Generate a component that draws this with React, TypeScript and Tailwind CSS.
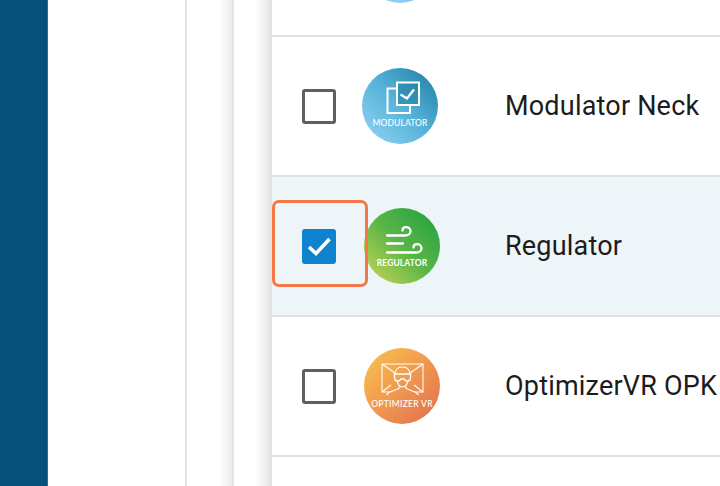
const rows = [
  { name: "Modulator Neck", logo: "modulator", checked: false },
  { name: "Regulator", logo: "regulator", checked: true },
  { name: "OptimizerVR OPK", logo: "optimizer", checked: false },
];

function ModulatorIcon() {
  return (
    <svg width="76" height="50" viewBox="0 0 76 50" fill="none" stroke="white" className="absolute left-0 top-0">
      <path d="M35 20.5H25.5V45H48V37" strokeWidth="2" />
      <rect x="35" y="14.5" width="22" height="22.5" fill="#1f7fa3" fillOpacity="0.55" strokeWidth="2" />
      <path d="M38.5 26.5L45 30.5L52 21.5" strokeWidth="2.4" />
    </svg>
  );
}

function RegulatorIcon() {
  return (
    <svg width="76" height="50" viewBox="0 0 76 50" fill="none" stroke="white" strokeWidth="2.3" strokeLinecap="round" className="absolute left-0 top-0">
      <path d="M23 27.5H41C44.5 27.5 46.5 25.5 46.5 23.2C46.5 20.7 44.5 19.2 42.2 19.2C40 19.2 38.5 20.7 38.5 22.5" />
      <path d="M23 35.5H39" />
      <path d="M23 44.5H52.5C55.5 44.5 57.5 42.5 57.5 40.2C57.5 37.7 55.5 36.2 53.2 36.2C51 36.2 49.5 37.7 49.5 39.5" />
    </svg>
  );
}

function OptimizerIcon() {
  return (
    <svg width="76" height="50" viewBox="0 0 76 50" fill="none" stroke="white" strokeWidth="1.1" className="absolute left-0 top-0">
      <path d="M18 16H59V44H51M18 16V44H26" />
      <path d="M18 16L31 25M59 16L46 25M18 44L27 37M59 44L50 37" />
      <path d="M31 27C31 21.5 34 19 38.5 19C43 19 46 21.5 46 27" />
      <path d="M30.5 26H46.5V29.5C46.5 32 45 33 43.5 33H42L40 31H37L35 33H33.5C32 33 30.5 32 30.5 29.5Z" strokeWidth="1.4" />
      <path d="M33 33C34 37 36 39 38.5 39C41 39 43 37 44 33" />
      <path d="M35 38.5V40.5L25 44.5L22.5 47M42 38.5V40.5L52 44.5L54.5 47" />
    </svg>
  );
}

function Logo({ kind }: { kind: string }) {
  if (kind === "modulator") {
    return (
      <div className="relative w-[76px] h-[76px] shrink-0 rounded-full bg-gradient-to-tr from-[#93d5f4] via-[#57b3da] to-[#167c9f] overflow-hidden">
        <ModulatorIcon />
        <span className="absolute left-0 right-0 top-[50px] text-center font-['Lato',sans-serif] text-[8.5px] leading-[11px] font-medium tracking-[0.1px] text-white">MODULATOR</span>
      </div>
    );
  }
  if (kind === "regulator") {
    return (
      <div className="relative w-[76px] h-[76px] shrink-0 rounded-full bg-gradient-to-tr from-[#cbd757] via-[#58b547] to-[#08a03f] overflow-hidden">
        <RegulatorIcon />
        <span className="absolute left-0 right-0 top-[50px] text-center font-['Lato',sans-serif] text-[8.5px] leading-[11px] font-bold tracking-[0.1px] text-white">REGULATOR</span>
      </div>
    );
  }
  return (
    <div className="relative w-[76px] h-[76px] shrink-0 rounded-full bg-gradient-to-br from-[#f9c44d] via-[#f0984f] to-[#de6c50] overflow-hidden">
      <OptimizerIcon />
      <span className="absolute left-0 right-0 top-[51px] text-center font-['Lato',sans-serif] text-[8.5px] leading-[11px] font-medium tracking-[0.3px] whitespace-nowrap text-white">OPTIMIZER VR</span>
    </div>
  );
}

function Checkbox({ checked }: { checked: boolean }) {
  if (checked) {
    return (
      <div className="w-[34px] h-[35px] rounded-[3px] bg-[#0f83cf] flex items-center justify-center">
        <svg width="26" height="22" viewBox="0 0 26 22" fill="none">
          <path d="M3 12L10 18.5L23.5 4" stroke="white" strokeWidth="3.6" />
        </svg>
      </div>
    );
  }
  return <div className="w-[34px] h-[35px] rounded-[3px] border-[3px] border-[#5f5f5f] bg-white" />;
}

function Row({ row }: { row: (typeof rows)[number] }) {
  return (
    <div className={`relative h-[140px] shrink-0 flex items-center border-b-2 border-[#e2e2e2] ${row.checked ? "bg-[#eef5f9]" : "bg-white"}`}>
      <div className="w-[90px] pl-[30px] shrink-0">
        <Checkbox checked={row.checked} />
      </div>
      {/* logo cell, the modulator one sits 2px further left */}
      <div className={`w-[144px] shrink-0 ${row.logo === "modulator" ? "" : "pl-[2px]"}`}>
        <Logo kind={row.logo} />
      </div>
      <span className="-ml-[1px] font-['Roboto',sans-serif] text-[27px] leading-none tracking-[0.2px] whitespace-nowrap text-[#1c1c1c]">{row.name}</span>
      {row.checked && (
        <div className="absolute left-0 top-[23px] w-[96px] h-[87px] rounded-[7px] border-[3px] border-[#f5784a]" />
      )}
    </div>
  );
}

export default function App() {
  return (
    <div className="flex w-[720px] h-[486px] overflow-hidden bg-white">
      <div className="w-[48px] shrink-0 bg-[#04527a] border-r border-[#2f6a9c]" />
      <div className="w-[137px] shrink-0 bg-white" />
      <div className="w-[47px] shrink-0 border-l-2 border-[#e3e3e3] bg-gradient-to-r from-white from-[72%] to-[#ebebeb]" />
      <div className="w-[38px] shrink-0 border-l-2 border-[#e3e3e3] bg-gradient-to-r from-white from-[60%] to-[#e6e6e6]" />
      <div className="flex-1 min-w-0 flex flex-col border-l-2 border-[#e2e2e2] overflow-hidden">
        <div className="h-[37px] shrink-0 overflow-hidden border-b-2 border-[#e2e2e2] pl-[90px]">
          <div className="w-[76px] h-[76px] -mt-[73px] rounded-full bg-gradient-to-tr from-[#93d4f2] to-[#6fbfe0]" />
        </div>
        {rows.map((row) => (
          <Row key={row.name} row={row} />
        ))}
      </div>
    </div>
  );
}
